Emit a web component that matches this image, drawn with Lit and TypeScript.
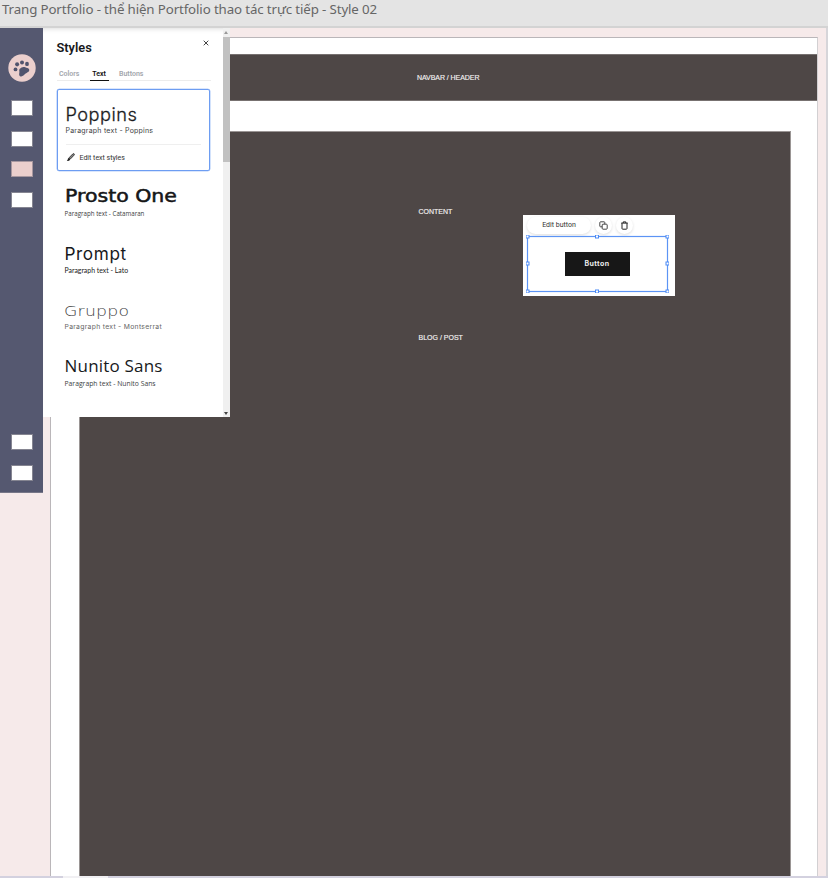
import { LitElement, html, css, svg } from "lit";
import { customElement } from "lit/decorators.js";

const FONTS = [
  { name: "Prosto One", body: "Catamaran", cls: "prosto" },
  { name: "Prompt", body: "Lato", cls: "prompt" },
  { name: "Gruppo", body: "Montserrat", cls: "gruppo" },
  { name: "Nunito Sans", body: "Nunito Sans", cls: "nunito" },
];

@customElement("side-rail")
class SideRail extends LitElement {
  static styles = css`
    :host { display: flex; flex-direction: column; align-items: center; box-sizing: border-box;
      width: 43px; height: 465px; background: #555870; padding: 26px 0 11px; border-bottom: 1px solid #777788; }
    .logo { width: 28px; height: 28px; display: block; margin-bottom: 18px; }
    .item { width: 22px; height: 16px; box-sizing: border-box; background: #fff; border: 1px solid #858591; margin-bottom: 14.7px; flex: none; }
    .active { background: #ebcfcd; border-color: #a7979f; }
    .gap { flex: 1; }
    .last { margin-bottom: 0; }
  `;
  render() {
    return html`
      <svg class="logo" viewBox="0 0 28 28">
        <circle cx="14" cy="14" r="13.7" fill="#ebcfcd" />
        <g fill="#4f536d">
          <circle cx="7.5" cy="15.4" r="1.9" />
          <ellipse cx="9.1" cy="10.3" rx="2" ry="2.1" />
          <ellipse cx="14" cy="8.5" rx="2" ry="2.1" />
          <ellipse cx="19" cy="9.9" rx="1.9" ry="2.2" />
          <path d="M11.8 14.8C13.2 13.2 15.4 12.3 17.2 13.3C18.4 14.4 20.7 13.8 21.2 15.4C21.6 17.6 19.4 18.2 17.6 19.6C15.8 21 14.8 22.8 12.7 22.4C10.6 21.8 11.2 19.7 11.4 18.2C11.5 17 10.8 16 11.8 14.8Z" />
        </g>
      </svg>
      <div class="item"></div><div class="item"></div><div class="item active"></div><div class="item"></div>
      <div class="gap"></div>
      <div class="item"></div><div class="item last"></div>
    `;
  }
}

@customElement("styles-panel")
class StylesPanel extends LitElement {
  static styles = css`
    :host { display: flex; width: 187px; height: 389px; background: #fff; color: #17191c; font-family: Roboto, sans-serif; white-space: nowrap; box-shadow: inset 0 5px 5px -4px #ddd; }
    .body { width: 179.5px; box-sizing: border-box; padding: 10px 0 0 13.5px; }
    .head { display: flex; justify-content: space-between; width: 153px; height: 20px; }
    .title { font-size: 12.8px; line-height: 19px; font-weight: 600; }
    .close { width: 6px; height: 6px; margin: 2.4px 1px 0 0; }
    .tabs { display: flex; width: 154px; height: 23px; border-bottom: 1px solid #ececec; box-sizing: border-box; font-size: 7px; line-height: 8px; font-weight: 600; color: #a3a6ac; padding: 12px 0 0 2.5px; margin-bottom: 7.5px; }
    .tab { width: 21px; margin-right: 10px; height: 10px; }
    .tab.on { width: 19px; text-align: center; color: #111; border-bottom: 1.5px solid #111; margin: 0 10.5px 0 -.5px; }
    .card { width: 153.5px; height: 82.5px; box-sizing: border-box; border: 1px solid #6d9df2; border-radius: 2px; padding: 14px 8px 0; box-shadow: 0 0 0 .3px #6d9df2; }
    .name { height: 21px; line-height: 21px; transform-origin: 0 50%; }
    .para { height: 10px; line-height: 10px; font-size: 7px; color: #3c3e42; margin-top: 1.5px; }
    .poppins { font: 300 18.2px/21px Inter, sans-serif; letter-spacing: .5px; -webkit-text-stroke: .3px #222; }
    .card .para { font-family: Inter, sans-serif; font-size: 7px; letter-spacing: .22px; }
    .edit { display: flex; align-items: center; height: 25px; margin-top: 8px; border-top: 1px solid #efefef; font-size: 7px; color: #333; }
    .pen { width: 9px; height: 9px; margin: 0 5px 0 0; }
    .list { padding: 15px 0 0 8px; }
    .row { height: 56.8px; }
    .prosto { font: 400 17.5px/21px "DejaVu Sans", sans-serif; letter-spacing: 0; -webkit-text-stroke: .5px #111; transform: scaleX(1.17); }
    .p-prosto { font-family: "Open Sans", sans-serif; font-size: 6.2px; }
    .prompt { font: 400 17.2px/21px Inter, sans-serif; letter-spacing: .6px; }
    .p-prompt { font-family: Lato, sans-serif; font-size: 6.9px; color: #222; }
    .gruppo { font: 200 14.5px/22px "DejaVu Sans", "DejaVu Sans Light", sans-serif; letter-spacing: .2px; color: #444; transform: scaleX(1.19); margin-left: -.7px; }
    .p-gruppo { font-family: Inter, sans-serif; font-size: 6.8px; letter-spacing: .3px; color: #666; }
    .nunito { font: 400 17px/20px "Open Sans", sans-serif; letter-spacing: .2px; }
    .p-nunito { font-family: "Open Sans", sans-serif; font-size: 6.8px; }
    .scroll { width: 7.5px; background: #f0f0f0; display: flex; flex-direction: column; align-items: center; justify-content: space-between; }
    .arrow { width: 4px; height: 3px; margin: 3px 0; flex: none; }
    .arrow.down { margin: 0 0 2px; }
    .thumb { width: 7.5px; height: 125px; background: #c1c1c1; flex: none; }
    .grow { flex: 1; }
  `;
  render() {
    return html`
      <div class="body">
        <div class="head"><div class="title">Styles</div>
          <svg class="close" viewBox="0 0 6 6"><path d="M.7.7L5.3 5.3M5.3.7L.7 5.3" stroke="#444" stroke-width="1" /></svg></div>
        <div class="tabs"><div class="tab">Colors</div><div class="tab on">Text</div><div class="tab">Buttons</div></div>
        <div class="card">
          <div class="name poppins">Poppins</div>
          <div class="para">Paragraph text - Poppins</div>
          <div class="edit"><svg class="pen" viewBox="0 0 9 9">
            <path d="M3.1 4.7L6.7 1Q7.8.2 8.2.9Q8.6 1.3 8 2.2L4.5 5.9Z" fill="#888" stroke="#222" stroke-width=".8" />
            <path d="M2.8 5.1Q4.3 5.2 4.1 6.7Q3.2 8.3.8 8Q1.9 7.2 1.8 6.1Q2 5.3 2.8 5.1Z" fill="#222" /></svg>Edit text styles</div>
        </div>
        <div class="list">${FONTS.map((f) => html`<div class="row"><div class="name ${f.cls}">${f.name}</div><div class="para p-${f.cls}">Paragraph text - ${f.body}</div></div>`)}</div>
      </div>
      <div class="scroll">
        <svg class="arrow" viewBox="0 0 4 3"><path d="M0 3L2 0L4 3Z" fill="#999" /></svg>
        <div class="thumb"></div><div class="grow"></div>
        <svg class="arrow down" viewBox="0 0 4 3"><path d="M0 0H4L2 3Z" fill="#444" /></svg>
      </div>
    `;
  }
}

@customElement("button-editor")
class ButtonEditor extends LitElement {
  static styles = css`
    :host { display: block; width: 152px; height: 81px; box-sizing: border-box; background: #fff; padding: 2px 4px; font-family: Roboto, sans-serif; }
    .tools { display: flex; gap: 4px; height: 17px; }
    .pill { width: 64px; height: 17px; line-height: 16px; border-radius: 9px; text-align: center; font-size: 7px; color: #333; box-shadow: 0 1px 3px #0002; }
    .round { width: 17px; height: 17px; border-radius: 50%; box-shadow: 0 1px 3px #0002; display: grid; place-items: center; }
    .icon { width: 9px; height: 9px; }
    .frame { display: grid; grid-template: 1fr / 1fr; place-items: center; width: 143px; height: 58px; margin-left: -1.5px; }
    .outline { grid-area: 1 / 1; width: 143px; height: 58px; margin-top: 1px; }
    .btn { grid-area: 1 / 1; width: 65px; height: 24px; background: #171717; color: #eee; text-align: center; font: 700 7px/23px Inter, sans-serif; letter-spacing: .4px; }
  `;
  render() {
    const handles = [[1.5, 1.5], [71, 1.5], [141.5, 1.5], [1.5, 28.5], [141.5, 28.5], [1.5, 56.5], [71, 56.5], [141.5, 56.5]];
    return html`
      <div class="tools">
        <div class="pill">Edit button</div>
        <div class="round"><svg class="icon" viewBox="0 0 9 9" fill="none" stroke="#333" stroke-width=".9"><rect x="3.2" y="3.2" width="5" height="5" rx=".8" /><path d="M3 5.8H1.5Q.8 5.8.8 5V1.6Q.8.8 1.6.8H5Q5.8.8 5.8 1.5V3" /></svg></div>
        <div class="round"><svg class="icon" viewBox="0 0 9 9" fill="none" stroke="#222" stroke-width="1"><path d="M1.2 2.1H7.8M3.2 2V.9H5.8V2M2 2.2V7.5Q2 8.2 2.7 8.2H6.3Q7 8.2 7 7.5V2.2" /></svg></div>
      </div>
      <div class="frame">
        <svg class="outline" viewBox="0 0 143 58"><rect x="1.5" y="1.5" width="140" height="55" fill="none" stroke="#5c94f5" stroke-width="1.2" />
          ${handles.map(([x, y]) => svg`<rect x=${x - 1.5} y=${y - 1.5} width="3" height="3" fill="#fff" stroke="#4b8af5" stroke-width="1" />`)}
        </svg>
        <div class="btn">Button</div>
      </div>
    `;
  }
}

@customElement("app-root")
class AppRoot extends LitElement {
  static styles = css`
    :host { display: flex; flex-direction: column; position: relative; width: 828px; height: 878px; overflow: hidden; background: #f6eaea; }
    .bar { height: 28px; box-sizing: border-box; background: #e4e4e4; border-bottom: 2px solid #d3d3d3; color: #666; font: 400 13.3px/19px "Noto Sans", sans-serif; letter-spacing: -.125px; padding-left: 2px; white-space: nowrap; }
    .canvas { flex: 1; box-sizing: border-box; padding: 9px 9px 0 50px; border-right: 2px solid #d6d5d9; }
    .page { height: 839px; width: 768px; box-sizing: border-box; background: #fff; border: 1px solid #bab6b9; border-right-color: #d2d0d2; border-bottom: 0; padding-top: 16px; }
    .label { color: #f2f0f0; font: 7px/10px "Liberation Sans", sans-serif; white-space: nowrap; }
    .nav { height: 47px; background: #4e4746; box-sizing: border-box; padding: 18px 0 0 366px; border-top: 1px solid #777170; border-bottom: 1px solid #777170; letter-spacing: -.06px; -webkit-text-stroke: .15px #f2f0f0; }
    .content { margin: 30px 26px 0 28px; height: 745px; background: #4e4746; border: 1px solid #9a9594; border-bottom: 0; box-sizing: border-box; padding: 75px 0 0 338.5px; -webkit-text-stroke: .15px #f2f0f0; }
    .editor { margin: 4px 0 0 104.5px; -webkit-text-stroke: 0; }
    .line { height: 10px; margin-bottom: -6px; }
    .foot { height: 2px; background: #d3d1df; display: flex; }
    .track { margin-left: 63px; width: 45px; background: #f1f0f3; }
    .overlay { position: absolute; top: 28px; left: 0; display: flex; align-items: flex-start; }
    .blog { margin-top: 37px; }
  `;
  render() {
    return html`
      <div class="bar">Trang Portfolio - thể hiện Portfolio thao tác trực tiếp - Style 02</div>
      <div class="canvas"><div class="page">
        <div class="nav label">NAVBAR / HEADER</div>
        <div class="content">
          <div class="label line">CONTENT</div>
          <button-editor class="editor"></button-editor>
          <div class="label blog">BLOG / POST</div>
        </div>
      </div></div>
      <div class="foot"><div class="track"></div></div>
      <div class="overlay"><side-rail></side-rail><styles-panel></styles-panel></div>
    `;
  }
}
